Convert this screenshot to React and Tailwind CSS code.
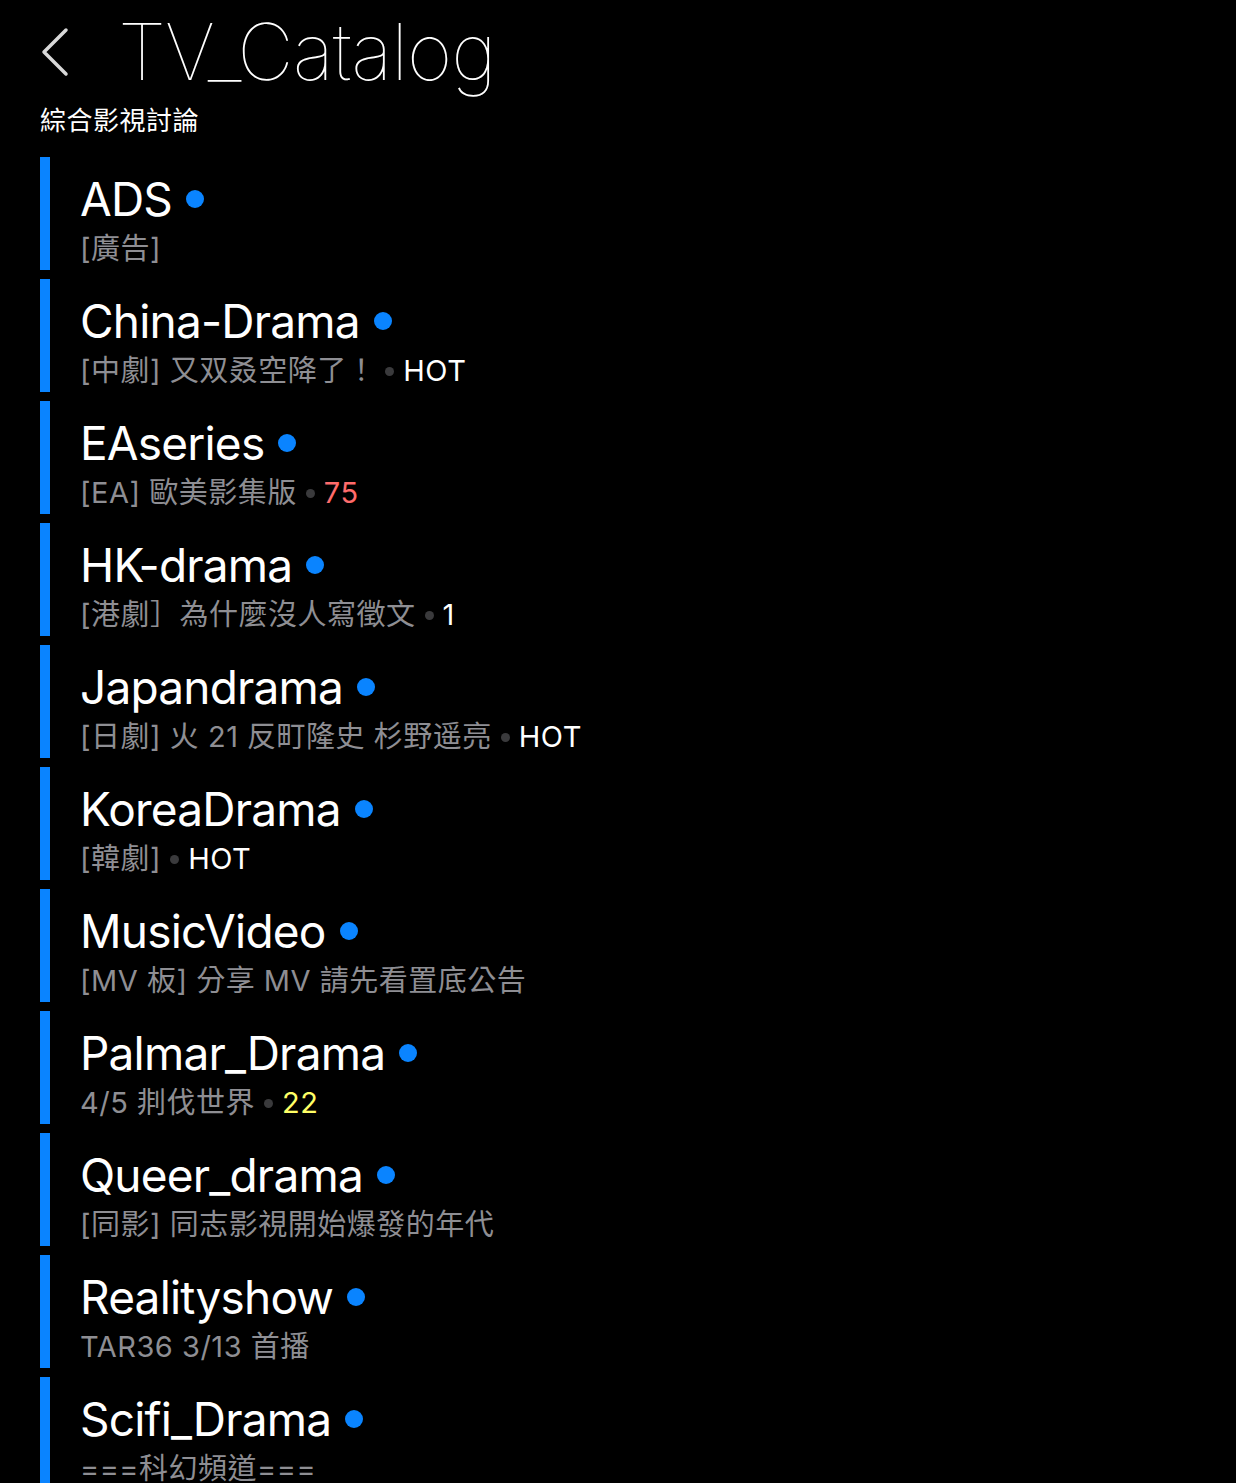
import React from "react";

const boards = [
  { name: "ADS", desc: "[廣告]" },
  { name: "China-Drama", desc: "[中劇] 又双叒空降了！", meta: "HOT", tone: "white" },
  { name: "EAseries", desc: "[EA] 歐美影集版", meta: "75", tone: "red" },
  { name: "HK-drama", desc: "[港劇］為什麼沒人寫徵文", meta: "1", tone: "white" },
  { name: "Japandrama", desc: "[日劇] 火 21 反町隆史 杉野遥亮", meta: "HOT", tone: "white" },
  { name: "KoreaDrama", desc: "[韓劇]", meta: "HOT", tone: "white" },
  { name: "MusicVideo", desc: "[MV 板] 分享 MV 請先看置底公告" },
  { name: "Palmar_Drama", desc: "4/5 剕伐世界", meta: "22", tone: "yellow" },
  { name: "Queer_drama", desc: "[同影] 同志影視開始爆發的年代" },
  { name: "Realityshow", desc: "TAR36 3/13 首播" },
  { name: "Scifi_Drama", desc: "===科幻頻道===" },
];

const toneClass = {
  white: "text-white",
  red: "text-[#ff6b6b]",
  yellow: "text-[#ffff66]",
};

const BoardRow = ({ board }) => (
  <div className="flex h-[113px]">
    <div className="w-[10px] bg-[#0a84ff]" />
    <div className="pl-[30px] pt-[14px]">
      <div className="flex items-center text-[46px] leading-[56px] tracking-[-0.8px] text-white">
        <span>{board.name}</span>
        <span className="ml-[14px] w-[18px] h-[18px] rounded-full bg-[#0a84ff]" />
      </div>
      <div className="mt-[2px] flex items-center text-[29px] leading-[40px] tracking-[0.5px] text-[#8e8e93]">
        <span>{board.desc}</span>
        {board.meta && (
          <>
            <span className="mx-[9px] w-[9px] h-[9px] rounded-full bg-[#3a3a3c]" />
            <span className={toneClass[board.tone]}>{board.meta}</span>
          </>
        )}
      </div>
    </div>
  </div>
);

export default function App() {
  return (
    <div
      className="min-h-[1483px] bg-black text-white overflow-hidden"
      style={{ fontFamily: 'Inter, "Noto Sans CJK TC", sans-serif' }}
    >
      <div className="flex items-center h-[104px] pl-[38px]">
        <svg width="32" height="52" viewBox="0 0 32 52" fill="none">
          <path d="M28 4 L6 26 L28 48" stroke="#d8d8d8" strokeWidth="3.5" strokeLinecap="round" strokeLinejoin="round" />
        </svg>
        <span className="ml-[48px] text-[78px] leading-[104px] font-thin tracking-[-1px] text-white">
          TV_Catalog
        </span>
      </div>
      <div className="pl-[40px] text-[26px] leading-[34px] tracking-[0.5px] text-white">綜合影視討論</div>
      <div className="mt-[19px] pl-[40px] flex flex-col gap-[9px]">
        {boards.map((b) => (
          <BoardRow key={b.name} board={b} />
        ))}
      </div>
    </div>
  );
}
